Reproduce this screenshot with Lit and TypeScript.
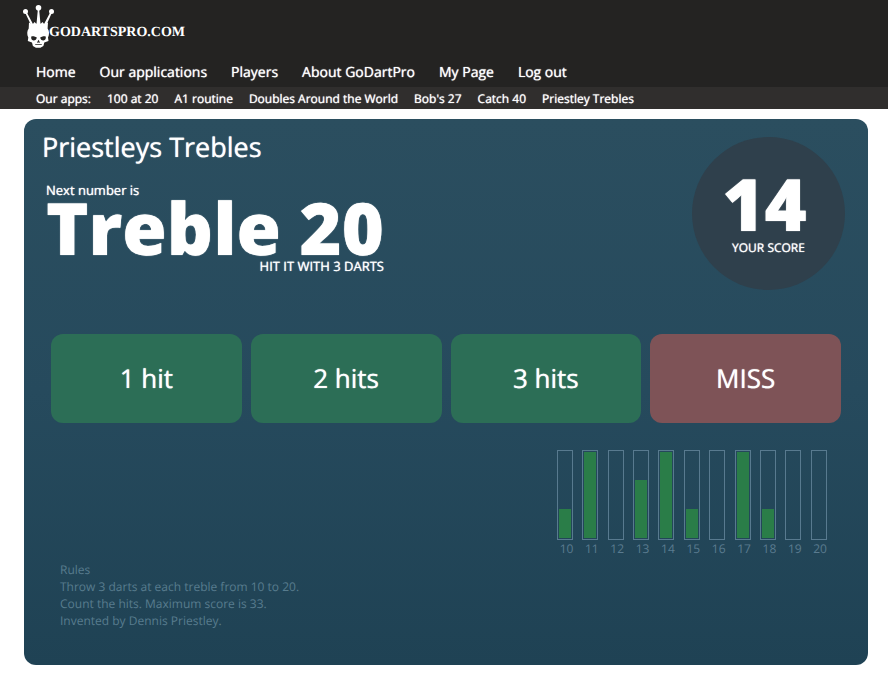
import { LitElement, html, css, svg } from "lit";
import { customElement } from "lit/decorators.js";

const logoMark = svg`
  <g fill="#fff">
    <circle cx="2.500" cy="6.500" r="2.500"></circle>
    <circle cx="15.500" cy="2.800" r="2.800"></circle>
    <circle cx="28.500" cy="6.500" r="2.500"></circle>
    <path d="M1.800 7 3.300 6.500 10.500 20 8.500 21ZM14.900 4h1.200l1.400 15h-4ZM27.700 6.500l1.500.5L23 21l-2.500-1Z"></path>
    <path d="M6 17.500l3.500 2 2-2.500 2 2 2-4 2 4 2-2 2 2.500 3.500-2-.4 6c1.800 2.500 1.900 6 .4 9l.5 3.500-4.200 1.500-.9 3.500-3 1.800h-4.500l-3-1.800-.9-3.500-4.200-1.500.5-3.500c-1.500-3-1.400-6.500.4-9Z"></path>
  </g>
  <g fill="#242322">
    <path d="M8.300 31.500c1.500-.8 4-.2 5.500 1.100-.3 2-1.500 3-3.300 2.900-1.800-.2-2.700-1.700-2.200-4ZM22.700 31.500c-1.500-.8-4-.2-5.500 1.100.3 2 1.500 3 3.300 2.900 1.800-.2 2.700-1.700 2.200-4Z"></path>
    <path d="M15.500 34.700l1.600 3-1.300-.3h-.6l-1.300.3ZM12 39.200l7 0-.4.800-6.200 0Z"></path>
  </g>`;

const menu = ["Home", "Our applications", "Players", "About GoDartPro", "My Page", "Log out"];
const apps = ["100 at 20", "A1 routine", "Doubles Around the World", "Bob's 27", "Catch 40", "Priestley Trebles"];
const hits: [number, number][] = [
  [10, 1], [11, 3], [12, 0], [13, 2], [14, 3], [15, 1], [16, 0], [17, 3], [18, 1], [19, 0], [20, 0],
];

@customElement("app-root")
export class AppRoot extends LitElement {
  static styles = css`
    :host {
      display: block;
      min-height: 100vh;
      background: #fff;
      color: #fff;
      font-family: "Open Sans", sans-serif;
      font-size: 13px;
      line-height: 18px;
      text-rendering: geometricPrecision;
    }
    a { color: inherit; text-decoration: none; }
    h1, p { margin: 0; }
    .top { background: #242322; }
    .logo {
      display: inline-flex;
      align-items: flex-start;
      box-sizing: border-box;
      height: 57px;
      padding: 5px 0 0 23px;
    }
    .mark { width: 32px; height: 44px; margin-right: -6px; }
    .word {
      font: bold 14px/18px "Liberation Serif", serif;
      padding-top: 19px;
    }
    .menu, .apps, h1, .next, .score, button { text-shadow: 0 0 1px #fff; }
    .menu {
      display: flex;
      flex-wrap: wrap;
      gap: 0 24px;
      padding: 6px 36px 4px;
      font-size: 14px;
      line-height: 20px;
    }
    .apps {
      display: flex;
      flex-wrap: wrap;
      gap: 0 16px;
      padding: 3px 36px 1px;
      background: #302e2d;
      font-size: 12px;
    }
    .card {
      margin: 10px 20px 16px 24px;
      padding: 12px 23px 36px 18px;
      border-radius: 12px;
      background: linear-gradient(#2b4e5f, #264a5d 50%, #1f4254);
    }
    .head {
      display: flex;
      justify-content: space-between;
      align-items: flex-start;
    }
    h1 { font-size: 27px; line-height: 32px; font-weight: 400; }
    .next {
      width: max-content;
      margin: 18px 0 0 4px;
    }
    .big { font-size: 72px; line-height: 58px; font-weight: 800; }
    .with { text-align: right; }
    .score {
      box-sizing: border-box;
      width: 153px;
      height: 153px;
      margin-top: 6px;
      padding-top: 38px;
      border-radius: 50%;
      background: #2f404c;
      text-align: center;
    }
    .score .big { padding-right: 8px; }
    .caption { margin-top: 6px; font-size: 12px; }
    .buttons {
      display: grid;
      grid-template-columns: repeat(4, 1fr);
      gap: 9px;
      margin: 44px 4px 27px 9px;
    }
    button {
      height: 89px;
      padding: 0 0 2px;
      border: 0;
      border-radius: 12px;
      background: #2c6e56;
      color: #fff;
      font: 26px "Open Sans", sans-serif;
      text-rendering: inherit;
    }
    .miss { background: #7e5357; }
    .chart {
      display: grid;
      grid-template-columns: repeat(11, 1fr);
      width: 279px;
      margin: 0 9px 0 auto;
      color: #5a7b8f;
      font-size: 12px;
      text-align: center;
    }
    .bar {
      box-sizing: border-box;
      display: flex;
      align-items: flex-end;
      width: 16px;
      height: 90px;
      padding: 1px;
      border: 1px solid #587a8f;
    }
    .fill { width: 100%; background: #2a7d48; }
    .label { width: 19px; }
    .rules {
      margin: 3px 0 0 18px;
      color: #587c8e;
      font-size: 12px;
      line-height: 17px;
    }
  `;

  render() {
    return html`
      <header>
        <div class="top">
          <a class="logo" href="#">
            <svg class="mark" viewBox="0 0 32 44" aria-hidden="true">${logoMark}</svg>
            <span class="word">GODARTSPRO.COM</span>
          </a>
          <nav class="menu">${menu.map((m) => html`<a href="#">${m}</a>`)}</nav>
        </div>
        <nav class="apps"><span>Our apps:</span>${apps.map((a) => html`<a href="#">${a}</a>`)}</nav>
      </header>
      <main class="card">
        <div class="head">
          <div>
            <h1>Priestleys Trebles</h1>
            <div class="next">
              <p>Next number is</p>
              <p class="big">Treble 20</p>
              <p class="with">HIT IT WITH 3 DARTS</p>
            </div>
          </div>
          <div class="score">
            <p class="big">14</p>
            <p class="caption">YOUR SCORE</p>
          </div>
        </div>
        <div class="buttons">
          <button>1 hit</button>
          <button>2 hits</button>
          <button>3 hits</button>
          <button class="miss">MISS</button>
        </div>
        <div class="chart">
          ${hits.map(
            ([n, count]) => html`<div>
              <div class="bar"><div class="fill" style="height:${Math.min(100, count * 34)}%"></div></div>
              <div class="label">${n}</div>
            </div>`
          )}
        </div>
        <div class="rules">
          <p>Rules</p>
          <p>Throw 3 darts at each treble from 10 to 20.</p>
          <p>Count the hits. Maximum score is 33.</p>
          <p>Invented by Dennis Priestley.</p>
        </div>
      </main>
    `;
  }
}
